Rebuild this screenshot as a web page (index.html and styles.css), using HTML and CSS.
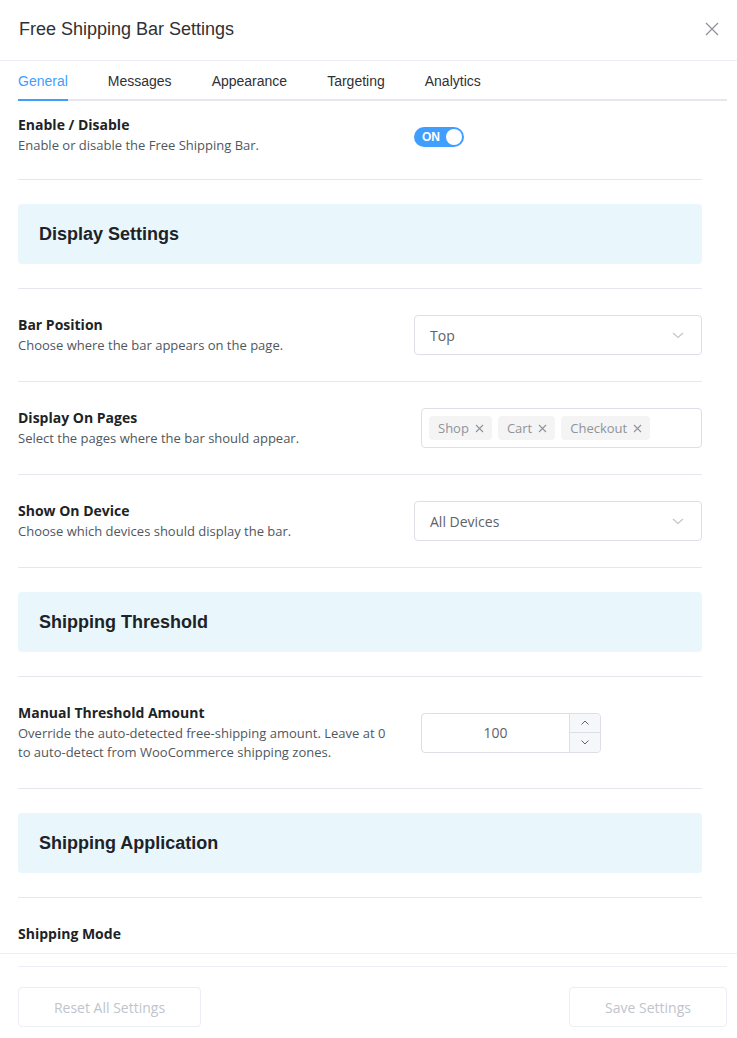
FILE: index.html
```html
<!DOCTYPE html>
<html lang="en">
  <head>
    <meta charset="UTF-8" />
    <title>Free Shipping Bar Settings</title>
    <link rel="stylesheet" href="styles.css">
  </head>
  <body>
    <div class="dialog">
      <header class="dialog-header">
        <h1 class="dialog-title">Free Shipping Bar Settings</h1>
        <button type="button" class="close" aria-label="Close">
          <svg width="14" height="14" viewBox="0 0 14 14"><path d="M1 1L13 13M13 1L1 13" stroke="#909399" stroke-width="1.3" fill="none"/></svg>
        </button>
      </header>

      <div class="dialog-body">
        <nav class="tabs">
          <span class="tab active">General</span>
          <span class="tab">Messages</span>
          <span class="tab">Appearance</span>
          <span class="tab">Targeting</span>
          <span class="tab">Analytics</span>
        </nav>

        <div class="pane">
          <div class="row first">
            <div class="info">
              <div class="label">Enable / Disable</div>
              <div class="desc">Enable or disable the Free Shipping Bar.</div>
            </div>
            <div class="control">
              <span class="switch"><span class="switch-text">ON</span><span class="knob"></span></span>
            </div>
          </div>

          <div class="section">
            <h2 class="section-title">Display Settings</h2>
          </div>

          <div class="row">
            <div class="info">
              <div class="label">Bar Position</div>
              <div class="desc">Choose where the bar appears on the page.</div>
            </div>
            <div class="control">
              <div class="select">
                <span>Top</span>
                <svg width="12" height="12" viewBox="0 0 12 12"><path d="M1 4L6 8.5L11 4" stroke="#c0c4cc" stroke-width="1.1" fill="none"/></svg>
              </div>
            </div>
          </div>

          <div class="row">
            <div class="info">
              <div class="label">Display On Pages</div>
              <div class="desc">Select the pages where the bar should appear.</div>
            </div>
            <div class="control">
              <div class="tag-input">
                <span class="tag">Shop <svg width="9" height="9" viewBox="0 0 9 9"><path d="M1 1L8 8M8 1L1 8" stroke="#909399" stroke-width="1.1"/></svg></span>
                <span class="tag">Cart <svg width="9" height="9" viewBox="0 0 9 9"><path d="M1 1L8 8M8 1L1 8" stroke="#909399" stroke-width="1.1"/></svg></span>
                <span class="tag">Checkout <svg width="9" height="9" viewBox="0 0 9 9"><path d="M1 1L8 8M8 1L1 8" stroke="#909399" stroke-width="1.1"/></svg></span>
              </div>
            </div>
          </div>

          <div class="row">
            <div class="info">
              <div class="label">Show On Device</div>
              <div class="desc">Choose which devices should display the bar.</div>
            </div>
            <div class="control">
              <div class="select">
                <span>All Devices</span>
                <svg width="12" height="12" viewBox="0 0 12 12"><path d="M1 4L6 8.5L11 4" stroke="#c0c4cc" stroke-width="1.1" fill="none"/></svg>
              </div>
            </div>
          </div>

          <div class="section">
            <h2 class="section-title">Shipping Threshold</h2>
          </div>

          <div class="row">
            <div class="info">
              <div class="label">Manual Threshold Amount</div>
              <div class="desc">Override the auto-detected free-shipping amount. Leave at 0 to auto-detect from WooCommerce shipping zones.</div>
            </div>
            <div class="control">
              <div class="number">
                <span class="number-value">100</span>
                <span class="steps">
                  <span class="step"><svg width="10" height="10" viewBox="0 0 10 10"><path d="M1.5 6.5L5 3L8.5 6.5" stroke="#606266" stroke-width="1" fill="none"/></svg></span>
                  <span class="step"><svg width="10" height="10" viewBox="0 0 10 10"><path d="M1.5 3.5L5 7L8.5 3.5" stroke="#606266" stroke-width="1" fill="none"/></svg></span>
                </span>
              </div>
            </div>
          </div>

          <div class="section">
            <h2 class="section-title">Shipping Application</h2>
          </div>

          <div class="row">
            <div class="info">
              <div class="label">Shipping Mode</div>
            </div>
          </div>
        </div>
      </div>

      <footer class="dialog-footer">
        <div class="footer-inner">
          <button type="button" class="btn btn-reset">Reset All Settings</button>
          <button type="button" class="btn btn-save">Save Settings</button>
        </div>
      </footer>
    </div>
  </body>
</html>
```

FILE: styles.css
```css
body {
  margin: 0;
  background: #fff;
}
.dialog {
  width: 737px;
  height: 1038px;
  overflow: hidden;
  font-family: "Open Sans", "Liberation Sans", sans-serif;
  color: #1d2327;
}
.dialog-header {
  height: 60px;
  padding: 0 18px 0 19px;
  display: flex;
  align-items: center;
  justify-content: space-between;
  border-bottom: 1px solid #ebeef5;
}
.dialog-title {
  margin: 0;
  margin-top: -2px;
  font-family: "Liberation Sans", Arial, sans-serif;
  font-weight: normal;
  font-size: 18px;
  color: #303133;
}
.close {
  border: none;
  background: none;
  padding: 0;
  margin-top: -2px;
  display: flex;
}

.dialog-body {
  padding: 0 10px 0 18px;
  border-bottom: 1px solid #ebeef5;
}
.tabs {
  height: 40px;
  box-sizing: border-box;
  border-bottom: 2px solid #e4e7ed;
  display: flex;
  gap: 40px;
  margin-bottom: 14px;
}
.tab {
  height: 40px;
  line-height: 40px;
  font-family: "Liberation Sans", Arial, sans-serif;
  font-size: 14px;
  color: #303133;
}
.tab.active {
  color: #409eff;
  box-shadow: inset 0 -2px 0 #409eff;
}
.pane {
  height: 838px;
  overflow: hidden;
  padding-right: 25px;
}

.row {
  display: grid;
  grid-template-columns: 1fr 288px;
  column-gap: 14px;
  align-items: center;
  padding: 26px 0;
  border-bottom: 1px solid #e4e7ed;
}
.row.first {
  padding-top: 0;
  padding-bottom: 24px;
}
.label {
  font-weight: bold;
  font-size: 14px;
  line-height: 20px;
  color: #1d2327;
}
.desc {
  margin-top: 1px;
  font-size: 13px;
  line-height: 19px;
  color: #50575e;
}

.switch {
  position: relative;
  display: inline-flex;
  align-items: center;
  width: 50px;
  height: 20px;
  border-radius: 10px;
  background: #409eff;
}
.switch-text {
  padding-left: 8px;
  font-family: "Liberation Sans", Arial, sans-serif;
  font-weight: bold;
  font-size: 12px;
  color: #fff;
}
.knob {
  position: absolute;
  right: 2px;
  top: 2px;
  width: 16px;
  height: 16px;
  border-radius: 50%;
  background: #fff;
}

.section {
  padding: 24px 0;
  border-bottom: 1px solid #e4e7ed;
}
.section-title {
  margin: 0;
  height: 60px;
  padding: 0 21px;
  display: flex;
  align-items: center;
  border-radius: 4px;
  background: #e9f7fc;
  font-family: "Liberation Sans", Arial, sans-serif;
  font-size: 18px;
  font-weight: bold;
  color: #1d2327;
}

.select {
  height: 40px;
  box-sizing: border-box;
  border: 1px solid #dcdfe6;
  border-radius: 4px;
  padding: 0 17px 0 15px;
  display: flex;
  align-items: center;
  justify-content: space-between;
  font-size: 14px;
  color: #606266;
}
.tag-input {
  margin-left: 7px;
  height: 40px;
  box-sizing: border-box;
  border: 1px solid #dcdfe6;
  border-radius: 4px;
  padding: 0 7px;
  display: flex;
  align-items: center;
  gap: 6px;
}
.tag {
  height: 24px;
  padding: 0 8px 0 9px;
  display: inline-flex;
  align-items: center;
  gap: 6px;
  border-radius: 4px;
  background: #f4f4f5;
  font-size: 13px;
  color: #909399;
}

.number {
  margin-left: 7px;
  width: 180px;
  height: 40px;
  box-sizing: border-box;
  border: 1px solid #dcdfe6;
  border-radius: 4px;
  display: flex;
}
.number-value {
  flex: 1;
  display: flex;
  align-items: center;
  justify-content: center;
  font-size: 14px;
  color: #606266;
}
.steps {
  width: 30px;
  display: flex;
  flex-direction: column;
  border-left: 1px solid #dcdfe6;
  background: #f5f7fa;
  border-radius: 0 4px 4px 0;
}
.step {
  flex: 1;
  display: flex;
  align-items: center;
  justify-content: center;
}
.step:first-child {
  border-bottom: 1px solid #dcdfe6;
}

.dialog-footer {
  padding: 12px 10px 0 18px;
}
.footer-inner {
  border-top: 1px solid #ebeef5;
  padding-top: 20px;
  display: flex;
  justify-content: space-between;
}
.btn {
  height: 40px;
  border: 1px solid #ebeef5;
  border-radius: 4px;
  background: #fff;
  font-family: "Open Sans", sans-serif;
  font-size: 14px;
  color: #c0c4cc;
}
.btn-reset {
  width: 183px;
}
.btn-save {
  width: 158px;
}
```
